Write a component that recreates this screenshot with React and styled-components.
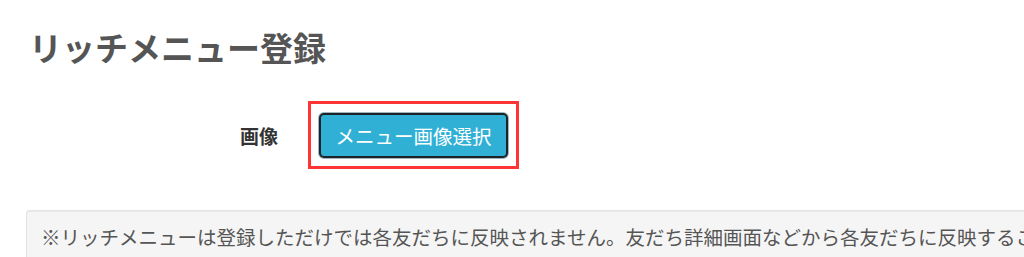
import React from 'react'
import styled, { createGlobalStyle } from 'styled-components'

const GlobalStyle = createGlobalStyle`
  html, body {
    margin: 0;
    padding: 0;
    background: #fff;
    overflow: hidden;
  }
  body {
    font-family: "Noto Sans CJK JP", "Noto Sans", "Liberation Sans", sans-serif;
    color: #333;
  }
`

function App() {
  return (
    <Page>
      <GlobalStyle />
      <Title>リッチメニュー登録</Title>

      <FormRow>
        <Label>画像</Label>
        <Highlight>
          <SelectButton type="button">メニュー画像選択</SelectButton>
        </Highlight>
      </FormRow>

      <Note>
        ※リッチメニューは登録しただけでは各友だちに反映されません。友だち詳細画面などから各友だちに反映することができます。
      </Note>
    </Page>
  )
}

export default App

const Page = styled.div`
  width: 1024px;
  height: 257px;
  padding: 29px 0 0 26px;
  box-sizing: border-box;
  overflow: hidden;
  display: flex;
  flex-direction: column;
`

const Title = styled.h1`
  margin: 0;
  font-size: 33px;
  line-height: 36px;
  font-weight: 700;
  color: #555;
  padding-left: 3px;
  white-space: nowrap;
`

const FormRow = styled.div`
  display: flex;
  align-items: center;
  margin-top: 36px;
  gap: 30px;
`

const Label = styled.div`
  width: 252px;
  text-align: right;
  font-size: 19px;
  font-weight: 700;
  color: #333;
`

const Highlight = styled.div`
  border: 3px solid #ff3535;
  padding: 9px 8px 8px 8px;
  display: flex;
`

const SelectButton = styled.button`
  width: 189px;
  height: 45px;
  border: 2px solid #1f2326;
  border-radius: 5px;
  box-shadow: 0 0 0 1px #9cb7c2;
  background: #31b0d5;
  color: #fff;
  font-family: inherit;
  font-size: 19.5px;
  padding: 0;
  cursor: pointer;
`

const Note = styled.div`
  margin-top: 41px;
  border: 1px solid #e3e3e3;
  border-right: none;
  border-radius: 4px 0 0 4px;
  box-shadow: inset 0 1px 1px rgba(0, 0, 0, 0.05);
  background: #f5f5f5;
  padding: 12px 0 20px 14px;
  font-size: 19.5px;
  line-height: 28px;
  color: #555;
  white-space: nowrap;
`
